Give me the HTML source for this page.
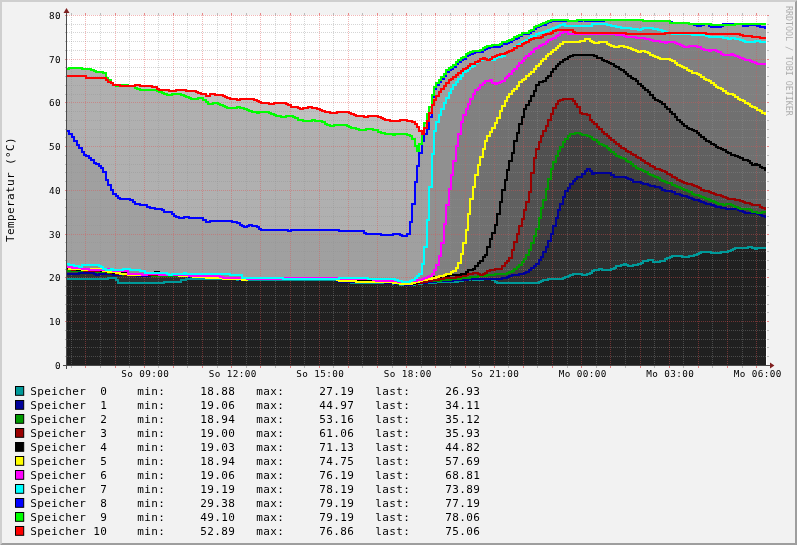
<!DOCTYPE html>
<html><head><meta charset="utf-8"><title>Speicher Temperatur</title>
<style>
html,body{margin:0;padding:0;background:#f2f2f2;overflow:hidden}
svg{display:block;will-change:transform}
text{font-family:"DejaVu Sans Mono","Liberation Mono",monospace;fill:#000;white-space:pre}
.ax{font-size:9.3px;letter-spacing:0.4px}
.lg{font-size:11px;letter-spacing:0.378px}
.wm{font-size:8.4px;letter-spacing:-0.057px;fill:#000;fill-opacity:0.30}
</style></head><body>
<svg width="797" height="545" viewBox="0 0 797 545">
<rect x="0" y="0" width="797" height="545" fill="#f2f2f2"/>
<path d="M0,0H797L795,2H2V543L0,545Z" fill="#cfcfcf"/>
<path d="M797,545H0L2,543H795V2L797,0Z" fill="#9e9e9e"/>
<rect x="67" y="15.0" width="700" height="350.0" fill="#ffffff"/>
<g shape-rendering="crispEdges">
<path d="M67,76H86V78H106V80H108V82H111V83H113V85H120V86H135V85H140V86H152V87H157V89H159V90H169V91H176V90H186V91H196V92H198V93H201V94H206V96H210V94H215V95H223V96H225V97H227V98H230V99H237V100H240V99H254V100H257V101H259V102H261V103H269V104H274V103H286V104H288V105H291V107H298V108H300V109H303V108H308V107H312V108H317V109H320V110H322V111H325V112H330V113H337V112H349V113H351V114H354V115H356V116H364V117H368V116H378V117H381V118H383V119H385V120H390V121H400V120H407V121H412V122H415V124H417V127H419V131H422V134H424V128H427V121H429V113H432V105H434V100H436V96H439V92H441V89H444V86H446V83H449V80H451V79H453V77H456V75H458V73H461V71H463V69H466V68H468V66H470V64H475V62H478V61H480V59H483V58H485V59H487V60H490V59H492V57H495V56H497V55H500V54H505V53H507V52H509V51H512V50H514V48H517V46H522V44H524V43H526V42H529V40H531V39H534V38H541V37H543V35H546V34H551V33H553V31H556V30H573V32H575V33H626V34H665V33H706V34H740V35H743V36H752V37H760V38H766V365H67Z" fill="#c0c0c0"/>
<path d="M67,69H69V68H82V69H91V70H94V71H96V72H103V73H106V78H108V80H111V83H113V85H116V86H118V85H128V86H135V88H137V89H140V90H157V91H159V92H162V93H164V94H167V95H172V94H181V95H184V96H186V97H189V98H191V99H198V98H203V100H206V102H208V104H213V103H218V104H220V105H223V106H225V107H227V108H237V107H240V108H244V109H247V110H249V111H252V112H257V113H259V112H269V113H271V114H274V115H276V116H281V117H286V116H293V117H295V118H298V120H303V121H312V120H315V121H322V122H325V124H327V125H330V126H334V125H347V126H349V127H351V128H356V129H359V130H366V129H373V130H378V132H381V133H385V134H393V135H395V134H407V135H410V136H412V139H415V146H417V151H419V144H422V132H424V123H427V114H429V107H432V95H434V87H436V83H439V80H441V77H444V74H446V70H449V68H451V67H453V65H456V62H458V60H461V58H463V57H466V54H468V53H470V52H473V51H480V50H483V48H485V47H487V46H492V45H500V44H502V42H507V41H509V40H512V39H514V37H517V36H519V35H522V33H529V31H531V30H534V27H536V26H539V25H541V24H543V23H546V22H548V21H551V20H568V21H577V20H643V21H670V23H689V24H711V25H735V24H766V365H67Z" fill="#b0b0b0"/>
<path d="M67,131H69V134H72V137H74V141H77V145H79V148H82V152H84V155H86V156H89V158H91V160H94V163H96V164H99V166H101V168H103V172H106V180H108V185H111V190H113V194H116V196H118V198H120V199H130V200H133V202H135V204H140V205H147V207H150V208H155V209H162V210H164V212H172V214H174V216H176V217H179V218H184V217H189V218H203V220H206V222H210V221H232V222H237V223H240V225H242V226H244V227H247V226H249V225H252V226H257V227H259V229H261V230H288V231H291V230H339V231H364V233H366V234H381V235H393V234H400V235H402V236H407V234H410V222H412V204H415V182H417V166H419V153H422V141H424V134H427V129H429V117H432V97H434V89H436V85H439V82H441V79H444V76H446V72H449V70H451V69H453V67H456V64H458V62H461V60H463V59H466V56H468V55H470V54H473V53H475V52H483V50H485V49H487V48H490V47H500V46H502V44H507V43H509V42H512V40H514V39H517V38H519V36H522V34H529V33H531V31H534V29H536V27H539V26H541V25H546V23H548V22H551V21H582V20H585V21H604V20H643V21H670V22H672V23H689V24H694V25H697V26H701V25H704V24H709V26H711V27H721V26H723V24H743V26H748V25H757V26H760V27H765V28H766V365H67Z" fill="#a0a0a0"/>
<path d="M67,264H69V265H74V266H79V267H82V265H99V266H101V267H103V269H106V270H111V269H113V270H123V269H130V270H140V271H145V273H167V274H169V275H172V274H184V273H186V274H230V275H242V278H283V279H339V278H368V279H395V280H398V281H402V282H410V281H412V280H415V278H417V276H419V274H422V264H424V247H427V220H429V187H432V154H434V131H436V122H439V115H441V109H444V103H446V98H449V93H451V89H453V85H456V82H458V79H461V76H463V72H466V71H468V69H470V67H473V66H475V63H478V61H480V60H483V58H485V59H490V58H492V60H495V58H497V57H502V56H505V53H507V52H509V51H512V50H514V47H517V45H519V44H522V42H524V41H526V40H529V38H531V36H536V34H539V33H543V32H546V31H548V30H551V29H553V28H556V27H558V26H560V25H563V24H565V26H592V24H607V25H611V26H616V27H621V28H631V29H638V30H641V29H643V28H653V29H658V30H662V31H665V32H667V33H672V34H692V35H706V36H709V37H723V38H728V39H731V38H735V39H740V40H743V41H745V42H755V41H760V42H766V365H67Z" fill="#909090"/>
<path d="M67,267H72V268H82V269H89V270H106V269H111V270H113V271H128V274H142V275H147V274H159V275H189V276H220V277H223V278H247V279H283V278H337V279H373V280H376V281H398V282H410V281H417V280H422V279H424V278H427V277H429V276H432V274H434V270H436V265H439V256H441V243H444V224H446V205H449V189H451V175H453V161H456V146H458V134H461V122H463V115H466V109H468V104H470V99H473V94H475V90H478V88H480V85H483V83H485V81H490V80H492V83H495V84H497V83H500V82H502V81H505V78H507V76H509V74H512V71H514V69H517V66H519V63H522V61H524V58H526V56H529V54H531V52H534V49H536V48H539V46H541V45H543V44H546V42H548V40H551V39H553V38H556V36H558V35H560V33H563V32H568V34H616V35H624V36H626V37H636V38H645V39H650V40H653V41H660V42H665V43H667V42H675V43H677V44H680V45H682V46H684V47H689V46H697V47H701V49H704V50H709V51H711V50H716V51H718V52H721V54H723V55H731V54H733V55H735V56H738V57H740V58H743V59H745V60H750V61H752V62H755V63H757V64H766V365H67Z" fill="#808080"/>
<path d="M67,267H69V269H82V270H91V269H101V270H103V271H108V272H116V273H120V274H128V275H147V274H150V273H157V274H162V275H179V276H193V277H206V278H223V279H242V280H247V279H337V280H339V281H356V282H393V283H400V284H412V283H415V282H419V281H422V280H427V279H432V278H436V277H439V276H444V275H446V274H451V272H453V271H456V268H458V263H461V254H463V243H466V230H468V214H470V199H473V187H475V175H478V165H480V157H483V149H485V141H487V136H490V132H492V128H495V123H497V118H500V111H502V106H505V101H507V97H509V94H512V91H514V89H517V86H519V82H522V80H524V79H526V76H529V74H531V72H534V69H536V66H539V64H541V61H543V59H546V56H548V54H551V52H553V50H556V48H558V46H560V44H563V42H580V41H585V39H590V41H592V42H594V43H599V42H607V44H609V45H611V46H614V47H619V46H624V47H628V48H631V49H633V50H636V51H638V52H641V51H645V52H648V53H650V55H653V56H655V57H658V58H660V59H670V60H672V61H675V63H677V65H680V66H682V67H684V68H687V70H689V71H692V73H697V74H699V75H701V77H704V79H706V80H709V81H711V83H714V85H716V87H718V88H721V89H723V91H726V93H728V94H733V95H735V97H738V99H740V100H743V101H745V103H748V104H750V106H752V107H755V108H757V110H760V111H762V113H765V114H766V365H67Z" fill="#707070"/>
<path d="M67,268H69V269H77V270H101V271H108V272H113V273H128V274H130V275H147V274H152V273H155V272H159V273H162V274H164V275H181V276H198V277H220V278H223V279H337V280H344V281H388V282H393V283H402V284H415V283H419V281H422V280H427V279H432V278H434V277H441V276H449V275H461V274H466V272H468V270H473V269H475V266H478V263H480V261H483V257H485V255H487V247H490V239H492V233H495V225H497V214H500V202H502V190H505V180H507V170H509V161H512V153H514V141H517V133H519V124H522V117H524V109H526V105H529V101H531V96H534V91H536V85H539V82H543V81H546V78H548V76H551V72H553V69H556V66H558V64H560V62H563V60H565V59H568V57H570V56H573V55H594V56H597V58H602V60H604V61H607V62H609V63H611V64H614V66H616V67H619V69H621V70H624V72H626V74H628V76H631V78H633V79H636V81H638V84H641V86H643V88H645V90H648V92H650V95H653V98H655V100H658V101H660V102H662V104H665V107H667V109H670V112H672V114H675V117H677V120H680V122H682V124H684V126H687V128H689V129H692V130H694V131H697V133H699V135H701V137H704V139H706V141H709V142H711V144H714V145H716V147H718V148H721V149H723V150H726V152H728V153H731V155H735V156H738V157H740V158H743V160H748V161H750V163H752V165H755V164H757V165H760V167H762V168H765V170H766V365H67Z" fill="#606060"/>
<path d="M67,269H72V270H84V271H106V272H111V273H116V274H125V275H179V276H196V277H215V278H223V279H337V280H339V281H383V282H393V283H400V284H417V283H422V282H427V281H432V280H439V279H444V278H456V277H461V276H466V275H468V274H473V273H478V274H480V275H483V274H485V273H487V271H490V270H495V269H502V266H505V263H507V261H509V258H512V250H514V242H517V234H519V226H522V219H524V210H526V202H529V192H531V173H534V158H536V149H539V142H541V136H543V131H546V126H548V120H551V114H553V108H556V104H558V101H560V100H563V99H573V101H575V104H577V107H580V113H582V114H587V115H590V120H592V122H594V124H597V127H599V129H602V132H604V134H607V136H609V138H611V140H614V142H616V144H619V146H621V148H624V149H626V151H628V152H631V154H633V155H636V157H638V158H641V160H643V161H645V163H648V164H650V166H653V167H655V169H660V170H662V171H665V172H667V174H670V175H672V177H675V178H677V180H680V181H682V182H684V183H687V184H692V185H694V186H697V187H699V188H701V190H704V191H709V192H711V193H714V194H716V195H721V196H723V197H726V198H728V199H735V200H740V201H743V202H745V203H750V204H752V205H760V207H762V208H765V209H766V365H67Z" fill="#505050"/>
<path d="M67,271H96V272H108V273H116V274H123V275H152V276H191V277H210V278H223V279H244V280H247V279H337V280H339V281H383V282H393V283H398V284H417V283H422V282H427V281H441V280H451V279H461V278H470V277H478V276H487V275H495V274H507V273H509V272H512V271H514V269H517V267H519V265H522V262H524V259H526V255H529V250H531V243H534V236H536V229H539V218H541V208H543V200H546V189H548V179H551V169H553V162H556V156H558V151H560V147H563V142H565V139H568V136H570V134H575V133H580V134H582V135H587V136H590V137H592V139H594V140H597V142H599V144H602V145H604V146H607V148H609V150H611V152H614V154H616V156H619V157H621V158H624V159H626V161H628V162H631V164H633V166H636V168H638V169H641V170H643V171H645V172H648V174H650V175H653V176H655V177H658V178H660V180H662V181H665V182H667V183H672V185H675V186H677V187H680V188H682V189H684V190H687V191H689V192H692V194H694V195H699V196H701V197H704V198H706V199H709V200H711V201H714V202H716V203H718V204H723V205H726V204H731V205H733V206H735V207H738V208H740V209H750V210H752V212H757V213H762V212H766V365H67Z" fill="#404040"/>
<path d="M67,274H79V273H94V274H96V275H99V274H113V275H137V276H189V277H208V278H223V279H240V280H247V279H337V281H339V282H385V283H395V284H405V285H412V284H417V283H427V282H436V281H453V280H468V279H502V278H507V277H509V276H512V275H519V274H524V273H526V272H529V270H531V268H534V266H536V264H539V260H541V257H543V252H546V247H548V241H551V234H553V226H556V218H558V210H560V204H563V197H565V191H568V188H570V184H573V181H575V179H577V177H582V174H585V171H587V169H590V171H592V174H594V173H611V175H614V177H626V178H628V179H631V180H633V182H641V183H643V184H648V185H650V186H655V187H660V188H662V190H665V191H672V192H675V194H680V195H682V196H687V197H689V198H692V199H694V200H699V201H701V202H704V203H706V204H711V205H714V206H716V207H721V208H726V209H735V208H738V210H740V211H743V212H745V213H757V214H760V215H762V216H765V217H766V365H67Z" fill="#303030"/>
<path d="M67,279H108V278H116V280H118V283H164V282H181V280H186V279H237V280H337V281H339V282H351V283H393V284H400V285H415V284H422V283H436V282H458V281H463V280H470V279H473V280H483V279H492V280H495V282H497V283H539V282H541V281H543V280H548V279H563V278H565V277H568V276H570V275H573V274H582V275H587V274H590V273H592V271H594V270H599V269H602V270H611V269H614V268H616V266H621V265H624V264H626V265H628V266H633V265H638V264H641V263H643V261H648V260H653V262H660V261H665V259H667V258H670V257H672V256H682V257H689V256H694V255H697V254H699V253H701V252H711V253H721V252H728V251H731V250H733V249H735V248H748V247H752V248H755V249H757V248H766V365H67Z" fill="#202020"/>
</g>
<g fill="none" stroke-width="1" shape-rendering="crispEdges">
<path d="M67,356.5H767" stroke="rgba(144,144,144,0.38)" stroke-dasharray="1 1"/>
<path d="M67,347.5H767" stroke="rgba(144,144,144,0.38)" stroke-dasharray="1 1"/>
<path d="M67,339.5H767" stroke="rgba(144,144,144,0.38)" stroke-dasharray="1 1"/>
<path d="M67,330.5H767" stroke="rgba(144,144,144,0.38)" stroke-dasharray="1 1"/>
<path d="M67,312.5H767" stroke="rgba(144,144,144,0.38)" stroke-dasharray="1 1"/>
<path d="M67,304.5H767" stroke="rgba(144,144,144,0.38)" stroke-dasharray="1 1"/>
<path d="M67,295.5H767" stroke="rgba(144,144,144,0.38)" stroke-dasharray="1 1"/>
<path d="M67,286.5H767" stroke="rgba(144,144,144,0.38)" stroke-dasharray="1 1"/>
<path d="M67,269.5H767" stroke="rgba(144,144,144,0.38)" stroke-dasharray="1 1"/>
<path d="M67,260.5H767" stroke="rgba(144,144,144,0.38)" stroke-dasharray="1 1"/>
<path d="M67,251.5H767" stroke="rgba(144,144,144,0.38)" stroke-dasharray="1 1"/>
<path d="M67,242.5H767" stroke="rgba(144,144,144,0.38)" stroke-dasharray="1 1"/>
<path d="M67,225.5H767" stroke="rgba(144,144,144,0.38)" stroke-dasharray="1 1"/>
<path d="M67,216.5H767" stroke="rgba(144,144,144,0.38)" stroke-dasharray="1 1"/>
<path d="M67,207.5H767" stroke="rgba(144,144,144,0.38)" stroke-dasharray="1 1"/>
<path d="M67,199.5H767" stroke="rgba(144,144,144,0.38)" stroke-dasharray="1 1"/>
<path d="M67,181.5H767" stroke="rgba(144,144,144,0.38)" stroke-dasharray="1 1"/>
<path d="M67,172.5H767" stroke="rgba(144,144,144,0.38)" stroke-dasharray="1 1"/>
<path d="M67,164.5H767" stroke="rgba(144,144,144,0.38)" stroke-dasharray="1 1"/>
<path d="M67,155.5H767" stroke="rgba(144,144,144,0.38)" stroke-dasharray="1 1"/>
<path d="M67,137.5H767" stroke="rgba(144,144,144,0.38)" stroke-dasharray="1 1"/>
<path d="M67,129.5H767" stroke="rgba(144,144,144,0.38)" stroke-dasharray="1 1"/>
<path d="M67,120.5H767" stroke="rgba(144,144,144,0.38)" stroke-dasharray="1 1"/>
<path d="M67,111.5H767" stroke="rgba(144,144,144,0.38)" stroke-dasharray="1 1"/>
<path d="M67,94.5H767" stroke="rgba(144,144,144,0.38)" stroke-dasharray="1 1"/>
<path d="M67,85.5H767" stroke="rgba(144,144,144,0.38)" stroke-dasharray="1 1"/>
<path d="M67,76.5H767" stroke="rgba(144,144,144,0.38)" stroke-dasharray="1 1"/>
<path d="M67,67.5H767" stroke="rgba(144,144,144,0.38)" stroke-dasharray="1 1"/>
<path d="M67,50.5H767" stroke="rgba(144,144,144,0.38)" stroke-dasharray="1 1"/>
<path d="M67,41.5H767" stroke="rgba(144,144,144,0.38)" stroke-dasharray="1 1"/>
<path d="M67,32.5H767" stroke="rgba(144,144,144,0.38)" stroke-dasharray="1 1"/>
<path d="M67,24.5H767" stroke="rgba(144,144,144,0.38)" stroke-dasharray="1 1"/>
<path d="M71.5,15.0V365.0" stroke="rgba(144,144,144,0.38)" stroke-dasharray="1 1"/>
<path d="M100.5,15.0V365.0" stroke="rgba(144,144,144,0.38)" stroke-dasharray="1 1"/>
<path d="M129.5,15.0V365.0" stroke="rgba(144,144,144,0.38)" stroke-dasharray="1 1"/>
<path d="M158.5,15.0V365.0" stroke="rgba(144,144,144,0.38)" stroke-dasharray="1 1"/>
<path d="M187.5,15.0V365.0" stroke="rgba(144,144,144,0.38)" stroke-dasharray="1 1"/>
<path d="M217.5,15.0V365.0" stroke="rgba(144,144,144,0.38)" stroke-dasharray="1 1"/>
<path d="M246.5,15.0V365.0" stroke="rgba(144,144,144,0.38)" stroke-dasharray="1 1"/>
<path d="M275.5,15.0V365.0" stroke="rgba(144,144,144,0.38)" stroke-dasharray="1 1"/>
<path d="M304.5,15.0V365.0" stroke="rgba(144,144,144,0.38)" stroke-dasharray="1 1"/>
<path d="M333.5,15.0V365.0" stroke="rgba(144,144,144,0.38)" stroke-dasharray="1 1"/>
<path d="M362.5,15.0V365.0" stroke="rgba(144,144,144,0.38)" stroke-dasharray="1 1"/>
<path d="M392.5,15.0V365.0" stroke="rgba(144,144,144,0.38)" stroke-dasharray="1 1"/>
<path d="M421.5,15.0V365.0" stroke="rgba(144,144,144,0.38)" stroke-dasharray="1 1"/>
<path d="M450.5,15.0V365.0" stroke="rgba(144,144,144,0.38)" stroke-dasharray="1 1"/>
<path d="M479.5,15.0V365.0" stroke="rgba(144,144,144,0.38)" stroke-dasharray="1 1"/>
<path d="M508.5,15.0V365.0" stroke="rgba(144,144,144,0.38)" stroke-dasharray="1 1"/>
<path d="M537.5,15.0V365.0" stroke="rgba(144,144,144,0.38)" stroke-dasharray="1 1"/>
<path d="M567.5,15.0V365.0" stroke="rgba(144,144,144,0.38)" stroke-dasharray="1 1"/>
<path d="M596.5,15.0V365.0" stroke="rgba(144,144,144,0.38)" stroke-dasharray="1 1"/>
<path d="M625.5,15.0V365.0" stroke="rgba(144,144,144,0.38)" stroke-dasharray="1 1"/>
<path d="M654.5,15.0V365.0" stroke="rgba(144,144,144,0.38)" stroke-dasharray="1 1"/>
<path d="M683.5,15.0V365.0" stroke="rgba(144,144,144,0.38)" stroke-dasharray="1 1"/>
<path d="M712.5,15.0V365.0" stroke="rgba(144,144,144,0.38)" stroke-dasharray="1 1"/>
<path d="M742.5,15.0V365.0" stroke="rgba(144,144,144,0.38)" stroke-dasharray="1 1"/>
<path d="M67,365.5H767" stroke="rgba(224,80,80,0.42)" stroke-dasharray="1 1"/>
<path d="M67,321.5H767" stroke="rgba(224,80,80,0.42)" stroke-dasharray="1 1"/>
<path d="M67,277.5H767" stroke="rgba(224,80,80,0.42)" stroke-dasharray="1 1"/>
<path d="M67,234.5H767" stroke="rgba(224,80,80,0.42)" stroke-dasharray="1 1"/>
<path d="M67,190.5H767" stroke="rgba(224,80,80,0.42)" stroke-dasharray="1 1"/>
<path d="M67,146.5H767" stroke="rgba(224,80,80,0.42)" stroke-dasharray="1 1"/>
<path d="M67,102.5H767" stroke="rgba(224,80,80,0.42)" stroke-dasharray="1 1"/>
<path d="M67,59.5H767" stroke="rgba(224,80,80,0.42)" stroke-dasharray="1 1"/>
<path d="M67,15.5H767" stroke="rgba(224,80,80,0.42)" stroke-dasharray="1 1"/>
<path d="M85.5,15.0V365.0" stroke="rgba(224,80,80,0.42)" stroke-dasharray="1 1"/>
<path d="M115.5,15.0V365.0" stroke="rgba(224,80,80,0.42)" stroke-dasharray="1 1"/>
<path d="M144.5,15.0V365.0" stroke="rgba(224,80,80,0.42)" stroke-dasharray="1 1"/>
<path d="M173.5,15.0V365.0" stroke="rgba(224,80,80,0.42)" stroke-dasharray="1 1"/>
<path d="M202.5,15.0V365.0" stroke="rgba(224,80,80,0.42)" stroke-dasharray="1 1"/>
<path d="M231.5,15.0V365.0" stroke="rgba(224,80,80,0.42)" stroke-dasharray="1 1"/>
<path d="M260.5,15.0V365.0" stroke="rgba(224,80,80,0.42)" stroke-dasharray="1 1"/>
<path d="M290.5,15.0V365.0" stroke="rgba(224,80,80,0.42)" stroke-dasharray="1 1"/>
<path d="M319.5,15.0V365.0" stroke="rgba(224,80,80,0.42)" stroke-dasharray="1 1"/>
<path d="M348.5,15.0V365.0" stroke="rgba(224,80,80,0.42)" stroke-dasharray="1 1"/>
<path d="M377.5,15.0V365.0" stroke="rgba(224,80,80,0.42)" stroke-dasharray="1 1"/>
<path d="M406.5,15.0V365.0" stroke="rgba(224,80,80,0.42)" stroke-dasharray="1 1"/>
<path d="M435.5,15.0V365.0" stroke="rgba(224,80,80,0.42)" stroke-dasharray="1 1"/>
<path d="M465.5,15.0V365.0" stroke="rgba(224,80,80,0.42)" stroke-dasharray="1 1"/>
<path d="M494.5,15.0V365.0" stroke="rgba(224,80,80,0.42)" stroke-dasharray="1 1"/>
<path d="M523.5,15.0V365.0" stroke="rgba(224,80,80,0.42)" stroke-dasharray="1 1"/>
<path d="M552.5,15.0V365.0" stroke="rgba(224,80,80,0.42)" stroke-dasharray="1 1"/>
<path d="M581.5,15.0V365.0" stroke="rgba(224,80,80,0.42)" stroke-dasharray="1 1"/>
<path d="M610.5,15.0V365.0" stroke="rgba(224,80,80,0.42)" stroke-dasharray="1 1"/>
<path d="M640.5,15.0V365.0" stroke="rgba(224,80,80,0.42)" stroke-dasharray="1 1"/>
<path d="M669.5,15.0V365.0" stroke="rgba(224,80,80,0.42)" stroke-dasharray="1 1"/>
<path d="M698.5,15.0V365.0" stroke="rgba(224,80,80,0.42)" stroke-dasharray="1 1"/>
<path d="M727.5,15.0V365.0" stroke="rgba(224,80,80,0.42)" stroke-dasharray="1 1"/>
<path d="M756.5,15.0V365.0" stroke="rgba(224,80,80,0.42)" stroke-dasharray="1 1"/>
<path d="M64.5,365.5H66.5M767,365.5H769" stroke="rgba(224,80,80,0.65)"/>
<path d="M64.5,356.5H66.5M767,356.5H769" stroke="rgba(144,144,144,0.55)"/>
<path d="M64.5,347.5H66.5M767,347.5H769" stroke="rgba(144,144,144,0.55)"/>
<path d="M64.5,339.5H66.5M767,339.5H769" stroke="rgba(144,144,144,0.55)"/>
<path d="M64.5,330.5H66.5M767,330.5H769" stroke="rgba(144,144,144,0.55)"/>
<path d="M64.5,321.5H66.5M767,321.5H769" stroke="rgba(224,80,80,0.65)"/>
<path d="M64.5,312.5H66.5M767,312.5H769" stroke="rgba(144,144,144,0.55)"/>
<path d="M64.5,304.5H66.5M767,304.5H769" stroke="rgba(144,144,144,0.55)"/>
<path d="M64.5,295.5H66.5M767,295.5H769" stroke="rgba(144,144,144,0.55)"/>
<path d="M64.5,286.5H66.5M767,286.5H769" stroke="rgba(144,144,144,0.55)"/>
<path d="M64.5,277.5H66.5M767,277.5H769" stroke="rgba(224,80,80,0.65)"/>
<path d="M64.5,269.5H66.5M767,269.5H769" stroke="rgba(144,144,144,0.55)"/>
<path d="M64.5,260.5H66.5M767,260.5H769" stroke="rgba(144,144,144,0.55)"/>
<path d="M64.5,251.5H66.5M767,251.5H769" stroke="rgba(144,144,144,0.55)"/>
<path d="M64.5,242.5H66.5M767,242.5H769" stroke="rgba(144,144,144,0.55)"/>
<path d="M64.5,234.5H66.5M767,234.5H769" stroke="rgba(224,80,80,0.65)"/>
<path d="M64.5,225.5H66.5M767,225.5H769" stroke="rgba(144,144,144,0.55)"/>
<path d="M64.5,216.5H66.5M767,216.5H769" stroke="rgba(144,144,144,0.55)"/>
<path d="M64.5,207.5H66.5M767,207.5H769" stroke="rgba(144,144,144,0.55)"/>
<path d="M64.5,199.5H66.5M767,199.5H769" stroke="rgba(144,144,144,0.55)"/>
<path d="M64.5,190.5H66.5M767,190.5H769" stroke="rgba(224,80,80,0.65)"/>
<path d="M64.5,181.5H66.5M767,181.5H769" stroke="rgba(144,144,144,0.55)"/>
<path d="M64.5,172.5H66.5M767,172.5H769" stroke="rgba(144,144,144,0.55)"/>
<path d="M64.5,164.5H66.5M767,164.5H769" stroke="rgba(144,144,144,0.55)"/>
<path d="M64.5,155.5H66.5M767,155.5H769" stroke="rgba(144,144,144,0.55)"/>
<path d="M64.5,146.5H66.5M767,146.5H769" stroke="rgba(224,80,80,0.65)"/>
<path d="M64.5,137.5H66.5M767,137.5H769" stroke="rgba(144,144,144,0.55)"/>
<path d="M64.5,129.5H66.5M767,129.5H769" stroke="rgba(144,144,144,0.55)"/>
<path d="M64.5,120.5H66.5M767,120.5H769" stroke="rgba(144,144,144,0.55)"/>
<path d="M64.5,111.5H66.5M767,111.5H769" stroke="rgba(144,144,144,0.55)"/>
<path d="M64.5,102.5H66.5M767,102.5H769" stroke="rgba(224,80,80,0.65)"/>
<path d="M64.5,94.5H66.5M767,94.5H769" stroke="rgba(144,144,144,0.55)"/>
<path d="M64.5,85.5H66.5M767,85.5H769" stroke="rgba(144,144,144,0.55)"/>
<path d="M64.5,76.5H66.5M767,76.5H769" stroke="rgba(144,144,144,0.55)"/>
<path d="M64.5,67.5H66.5M767,67.5H769" stroke="rgba(144,144,144,0.55)"/>
<path d="M64.5,59.5H66.5M767,59.5H769" stroke="rgba(224,80,80,0.65)"/>
<path d="M64.5,50.5H66.5M767,50.5H769" stroke="rgba(144,144,144,0.55)"/>
<path d="M64.5,41.5H66.5M767,41.5H769" stroke="rgba(144,144,144,0.55)"/>
<path d="M64.5,32.5H66.5M767,32.5H769" stroke="rgba(144,144,144,0.55)"/>
<path d="M64.5,24.5H66.5M767,24.5H769" stroke="rgba(144,144,144,0.55)"/>
<path d="M64.5,15.5H66.5M767,15.5H769" stroke="rgba(224,80,80,0.65)"/>
<path d="M71.5,13.0V15.0M71.5,366.0V368.0" stroke="rgba(144,144,144,0.55)"/>
<path d="M85.5,13.0V15.0M85.5,366.0V368.0" stroke="rgba(224,80,80,0.65)"/>
<path d="M100.5,13.0V15.0M100.5,366.0V368.0" stroke="rgba(144,144,144,0.55)"/>
<path d="M115.5,13.0V15.0M115.5,366.0V368.0" stroke="rgba(224,80,80,0.65)"/>
<path d="M129.5,13.0V15.0M129.5,366.0V368.0" stroke="rgba(144,144,144,0.55)"/>
<path d="M144.5,13.0V15.0M144.5,366.0V368.0" stroke="rgba(224,80,80,0.65)"/>
<path d="M158.5,13.0V15.0M158.5,366.0V368.0" stroke="rgba(144,144,144,0.55)"/>
<path d="M173.5,13.0V15.0M173.5,366.0V368.0" stroke="rgba(224,80,80,0.65)"/>
<path d="M187.5,13.0V15.0M187.5,366.0V368.0" stroke="rgba(144,144,144,0.55)"/>
<path d="M202.5,13.0V15.0M202.5,366.0V368.0" stroke="rgba(224,80,80,0.65)"/>
<path d="M217.5,13.0V15.0M217.5,366.0V368.0" stroke="rgba(144,144,144,0.55)"/>
<path d="M231.5,13.0V15.0M231.5,366.0V368.0" stroke="rgba(224,80,80,0.65)"/>
<path d="M246.5,13.0V15.0M246.5,366.0V368.0" stroke="rgba(144,144,144,0.55)"/>
<path d="M260.5,13.0V15.0M260.5,366.0V368.0" stroke="rgba(224,80,80,0.65)"/>
<path d="M275.5,13.0V15.0M275.5,366.0V368.0" stroke="rgba(144,144,144,0.55)"/>
<path d="M290.5,13.0V15.0M290.5,366.0V368.0" stroke="rgba(224,80,80,0.65)"/>
<path d="M304.5,13.0V15.0M304.5,366.0V368.0" stroke="rgba(144,144,144,0.55)"/>
<path d="M319.5,13.0V15.0M319.5,366.0V368.0" stroke="rgba(224,80,80,0.65)"/>
<path d="M333.5,13.0V15.0M333.5,366.0V368.0" stroke="rgba(144,144,144,0.55)"/>
<path d="M348.5,13.0V15.0M348.5,366.0V368.0" stroke="rgba(224,80,80,0.65)"/>
<path d="M362.5,13.0V15.0M362.5,366.0V368.0" stroke="rgba(144,144,144,0.55)"/>
<path d="M377.5,13.0V15.0M377.5,366.0V368.0" stroke="rgba(224,80,80,0.65)"/>
<path d="M392.5,13.0V15.0M392.5,366.0V368.0" stroke="rgba(144,144,144,0.55)"/>
<path d="M406.5,13.0V15.0M406.5,366.0V368.0" stroke="rgba(224,80,80,0.65)"/>
<path d="M421.5,13.0V15.0M421.5,366.0V368.0" stroke="rgba(144,144,144,0.55)"/>
<path d="M435.5,13.0V15.0M435.5,366.0V368.0" stroke="rgba(224,80,80,0.65)"/>
<path d="M450.5,13.0V15.0M450.5,366.0V368.0" stroke="rgba(144,144,144,0.55)"/>
<path d="M465.5,13.0V15.0M465.5,366.0V368.0" stroke="rgba(224,80,80,0.65)"/>
<path d="M479.5,13.0V15.0M479.5,366.0V368.0" stroke="rgba(144,144,144,0.55)"/>
<path d="M494.5,13.0V15.0M494.5,366.0V368.0" stroke="rgba(224,80,80,0.65)"/>
<path d="M508.5,13.0V15.0M508.5,366.0V368.0" stroke="rgba(144,144,144,0.55)"/>
<path d="M523.5,13.0V15.0M523.5,366.0V368.0" stroke="rgba(224,80,80,0.65)"/>
<path d="M537.5,13.0V15.0M537.5,366.0V368.0" stroke="rgba(144,144,144,0.55)"/>
<path d="M552.5,13.0V15.0M552.5,366.0V368.0" stroke="rgba(224,80,80,0.65)"/>
<path d="M567.5,13.0V15.0M567.5,366.0V368.0" stroke="rgba(144,144,144,0.55)"/>
<path d="M581.5,13.0V15.0M581.5,366.0V368.0" stroke="rgba(224,80,80,0.65)"/>
<path d="M596.5,13.0V15.0M596.5,366.0V368.0" stroke="rgba(144,144,144,0.55)"/>
<path d="M610.5,13.0V15.0M610.5,366.0V368.0" stroke="rgba(224,80,80,0.65)"/>
<path d="M625.5,13.0V15.0M625.5,366.0V368.0" stroke="rgba(144,144,144,0.55)"/>
<path d="M640.5,13.0V15.0M640.5,366.0V368.0" stroke="rgba(224,80,80,0.65)"/>
<path d="M654.5,13.0V15.0M654.5,366.0V368.0" stroke="rgba(144,144,144,0.55)"/>
<path d="M669.5,13.0V15.0M669.5,366.0V368.0" stroke="rgba(224,80,80,0.65)"/>
<path d="M683.5,13.0V15.0M683.5,366.0V368.0" stroke="rgba(144,144,144,0.55)"/>
<path d="M698.5,13.0V15.0M698.5,366.0V368.0" stroke="rgba(224,80,80,0.65)"/>
<path d="M712.5,13.0V15.0M712.5,366.0V368.0" stroke="rgba(144,144,144,0.55)"/>
<path d="M727.5,13.0V15.0M727.5,366.0V368.0" stroke="rgba(224,80,80,0.65)"/>
<path d="M742.5,13.0V15.0M742.5,366.0V368.0" stroke="rgba(144,144,144,0.55)"/>
<path d="M756.5,13.0V15.0M756.5,366.0V368.0" stroke="rgba(224,80,80,0.65)"/>
</g>
<g fill="none" stroke-width="2" stroke-linejoin="miter" shape-rendering="crispEdges">
<path d="M67,279H108V278H116V280H118V283H164V282H181V280H186V279H237V280H337V281H339V282H351V283H393V284H400V285H415V284H422V283H436V282H458V281H463V280H470V279H473V280H483V279H492V280H495V282H497V283H539V282H541V281H543V280H548V279H563V278H565V277H568V276H570V275H573V274H582V275H587V274H590V273H592V271H594V270H599V269H602V270H611V269H614V268H616V266H621V265H624V264H626V265H628V266H633V265H638V264H641V263H643V261H648V260H653V262H660V261H665V259H667V258H670V257H672V256H682V257H689V256H694V255H697V254H699V253H701V252H711V253H721V252H728V251H731V250H733V249H735V248H748V247H752V248H755V249H757V248H766" stroke="#009999"/>
<path d="M67,274H79V273H94V274H96V275H99V274H113V275H137V276H189V277H208V278H223V279H240V280H247V279H337V281H339V282H385V283H395V284H405V285H412V284H417V283H427V282H436V281H453V280H468V279H502V278H507V277H509V276H512V275H519V274H524V273H526V272H529V270H531V268H534V266H536V264H539V260H541V257H543V252H546V247H548V241H551V234H553V226H556V218H558V210H560V204H563V197H565V191H568V188H570V184H573V181H575V179H577V177H582V174H585V171H587V169H590V171H592V174H594V173H611V175H614V177H626V178H628V179H631V180H633V182H641V183H643V184H648V185H650V186H655V187H660V188H662V190H665V191H672V192H675V194H680V195H682V196H687V197H689V198H692V199H694V200H699V201H701V202H704V203H706V204H711V205H714V206H716V207H721V208H726V209H735V208H738V210H740V211H743V212H745V213H757V214H760V215H762V216H765V217H766" stroke="#000099"/>
<path d="M67,271H96V272H108V273H116V274H123V275H152V276H191V277H210V278H223V279H244V280H247V279H337V280H339V281H383V282H393V283H398V284H417V283H422V282H427V281H441V280H451V279H461V278H470V277H478V276H487V275H495V274H507V273H509V272H512V271H514V269H517V267H519V265H522V262H524V259H526V255H529V250H531V243H534V236H536V229H539V218H541V208H543V200H546V189H548V179H551V169H553V162H556V156H558V151H560V147H563V142H565V139H568V136H570V134H575V133H580V134H582V135H587V136H590V137H592V139H594V140H597V142H599V144H602V145H604V146H607V148H609V150H611V152H614V154H616V156H619V157H621V158H624V159H626V161H628V162H631V164H633V166H636V168H638V169H641V170H643V171H645V172H648V174H650V175H653V176H655V177H658V178H660V180H662V181H665V182H667V183H672V185H675V186H677V187H680V188H682V189H684V190H687V191H689V192H692V194H694V195H699V196H701V197H704V198H706V199H709V200H711V201H714V202H716V203H718V204H723V205H726V204H731V205H733V206H735V207H738V208H740V209H750V210H752V212H757V213H762V212H766" stroke="#009900"/>
<path d="M67,269H72V270H84V271H106V272H111V273H116V274H125V275H179V276H196V277H215V278H223V279H337V280H339V281H383V282H393V283H400V284H417V283H422V282H427V281H432V280H439V279H444V278H456V277H461V276H466V275H468V274H473V273H478V274H480V275H483V274H485V273H487V271H490V270H495V269H502V266H505V263H507V261H509V258H512V250H514V242H517V234H519V226H522V219H524V210H526V202H529V192H531V173H534V158H536V149H539V142H541V136H543V131H546V126H548V120H551V114H553V108H556V104H558V101H560V100H563V99H573V101H575V104H577V107H580V113H582V114H587V115H590V120H592V122H594V124H597V127H599V129H602V132H604V134H607V136H609V138H611V140H614V142H616V144H619V146H621V148H624V149H626V151H628V152H631V154H633V155H636V157H638V158H641V160H643V161H645V163H648V164H650V166H653V167H655V169H660V170H662V171H665V172H667V174H670V175H672V177H675V178H677V180H680V181H682V182H684V183H687V184H692V185H694V186H697V187H699V188H701V190H704V191H709V192H711V193H714V194H716V195H721V196H723V197H726V198H728V199H735V200H740V201H743V202H745V203H750V204H752V205H760V207H762V208H765V209H766" stroke="#990000"/>
<path d="M67,268H69V269H77V270H101V271H108V272H113V273H128V274H130V275H147V274H152V273H155V272H159V273H162V274H164V275H181V276H198V277H220V278H223V279H337V280H344V281H388V282H393V283H402V284H415V283H419V281H422V280H427V279H432V278H434V277H441V276H449V275H461V274H466V272H468V270H473V269H475V266H478V263H480V261H483V257H485V255H487V247H490V239H492V233H495V225H497V214H500V202H502V190H505V180H507V170H509V161H512V153H514V141H517V133H519V124H522V117H524V109H526V105H529V101H531V96H534V91H536V85H539V82H543V81H546V78H548V76H551V72H553V69H556V66H558V64H560V62H563V60H565V59H568V57H570V56H573V55H594V56H597V58H602V60H604V61H607V62H609V63H611V64H614V66H616V67H619V69H621V70H624V72H626V74H628V76H631V78H633V79H636V81H638V84H641V86H643V88H645V90H648V92H650V95H653V98H655V100H658V101H660V102H662V104H665V107H667V109H670V112H672V114H675V117H677V120H680V122H682V124H684V126H687V128H689V129H692V130H694V131H697V133H699V135H701V137H704V139H706V141H709V142H711V144H714V145H716V147H718V148H721V149H723V150H726V152H728V153H731V155H735V156H738V157H740V158H743V160H748V161H750V163H752V165H755V164H757V165H760V167H762V168H765V170H766" stroke="#000000"/>
<path d="M67,267H69V269H82V270H91V269H101V270H103V271H108V272H116V273H120V274H128V275H147V274H150V273H157V274H162V275H179V276H193V277H206V278H223V279H242V280H247V279H337V280H339V281H356V282H393V283H400V284H412V283H415V282H419V281H422V280H427V279H432V278H436V277H439V276H444V275H446V274H451V272H453V271H456V268H458V263H461V254H463V243H466V230H468V214H470V199H473V187H475V175H478V165H480V157H483V149H485V141H487V136H490V132H492V128H495V123H497V118H500V111H502V106H505V101H507V97H509V94H512V91H514V89H517V86H519V82H522V80H524V79H526V76H529V74H531V72H534V69H536V66H539V64H541V61H543V59H546V56H548V54H551V52H553V50H556V48H558V46H560V44H563V42H580V41H585V39H590V41H592V42H594V43H599V42H607V44H609V45H611V46H614V47H619V46H624V47H628V48H631V49H633V50H636V51H638V52H641V51H645V52H648V53H650V55H653V56H655V57H658V58H660V59H670V60H672V61H675V63H677V65H680V66H682V67H684V68H687V70H689V71H692V73H697V74H699V75H701V77H704V79H706V80H709V81H711V83H714V85H716V87H718V88H721V89H723V91H726V93H728V94H733V95H735V97H738V99H740V100H743V101H745V103H748V104H750V106H752V107H755V108H757V110H760V111H762V113H765V114H766" stroke="#ffff00"/>
<path d="M67,267H72V268H82V269H89V270H106V269H111V270H113V271H128V274H142V275H147V274H159V275H189V276H220V277H223V278H247V279H283V278H337V279H373V280H376V281H398V282H410V281H417V280H422V279H424V278H427V277H429V276H432V274H434V270H436V265H439V256H441V243H444V224H446V205H449V189H451V175H453V161H456V146H458V134H461V122H463V115H466V109H468V104H470V99H473V94H475V90H478V88H480V85H483V83H485V81H490V80H492V83H495V84H497V83H500V82H502V81H505V78H507V76H509V74H512V71H514V69H517V66H519V63H522V61H524V58H526V56H529V54H531V52H534V49H536V48H539V46H541V45H543V44H546V42H548V40H551V39H553V38H556V36H558V35H560V33H563V32H568V34H616V35H624V36H626V37H636V38H645V39H650V40H653V41H660V42H665V43H667V42H675V43H677V44H680V45H682V46H684V47H689V46H697V47H701V49H704V50H709V51H711V50H716V51H718V52H721V54H723V55H731V54H733V55H735V56H738V57H740V58H743V59H745V60H750V61H752V62H755V63H757V64H766" stroke="#ff00ff"/>
<path d="M67,264H69V265H74V266H79V267H82V265H99V266H101V267H103V269H106V270H111V269H113V270H123V269H130V270H140V271H145V273H167V274H169V275H172V274H184V273H186V274H230V275H242V278H283V279H339V278H368V279H395V280H398V281H402V282H410V281H412V280H415V278H417V276H419V274H422V264H424V247H427V220H429V187H432V154H434V131H436V122H439V115H441V109H444V103H446V98H449V93H451V89H453V85H456V82H458V79H461V76H463V72H466V71H468V69H470V67H473V66H475V63H478V61H480V60H483V58H485V59H490V58H492V60H495V58H497V57H502V56H505V53H507V52H509V51H512V50H514V47H517V45H519V44H522V42H524V41H526V40H529V38H531V36H536V34H539V33H543V32H546V31H548V30H551V29H553V28H556V27H558V26H560V25H563V24H565V26H592V24H607V25H611V26H616V27H621V28H631V29H638V30H641V29H643V28H653V29H658V30H662V31H665V32H667V33H672V34H692V35H706V36H709V37H723V38H728V39H731V38H735V39H740V40H743V41H745V42H755V41H760V42H766" stroke="#00ffff"/>
<path d="M67,131H69V134H72V137H74V141H77V145H79V148H82V152H84V155H86V156H89V158H91V160H94V163H96V164H99V166H101V168H103V172H106V180H108V185H111V190H113V194H116V196H118V198H120V199H130V200H133V202H135V204H140V205H147V207H150V208H155V209H162V210H164V212H172V214H174V216H176V217H179V218H184V217H189V218H203V220H206V222H210V221H232V222H237V223H240V225H242V226H244V227H247V226H249V225H252V226H257V227H259V229H261V230H288V231H291V230H339V231H364V233H366V234H381V235H393V234H400V235H402V236H407V234H410V222H412V204H415V182H417V166H419V153H422V141H424V134H427V129H429V117H432V97H434V89H436V85H439V82H441V79H444V76H446V72H449V70H451V69H453V67H456V64H458V62H461V60H463V59H466V56H468V55H470V54H473V53H475V52H483V50H485V49H487V48H490V47H500V46H502V44H507V43H509V42H512V40H514V39H517V38H519V36H522V34H529V33H531V31H534V29H536V27H539V26H541V25H546V23H548V22H551V21H582V20H585V21H604V20H643V21H670V22H672V23H689V24H694V25H697V26H701V25H704V24H709V26H711V27H721V26H723V24H743V26H748V25H757V26H760V27H765V28H766" stroke="#0000ff"/>
<path d="M67,69H69V68H82V69H91V70H94V71H96V72H103V73H106V78H108V80H111V83H113V85H116V86H118V85H128V86H135V88H137V89H140V90H157V91H159V92H162V93H164V94H167V95H172V94H181V95H184V96H186V97H189V98H191V99H198V98H203V100H206V102H208V104H213V103H218V104H220V105H223V106H225V107H227V108H237V107H240V108H244V109H247V110H249V111H252V112H257V113H259V112H269V113H271V114H274V115H276V116H281V117H286V116H293V117H295V118H298V120H303V121H312V120H315V121H322V122H325V124H327V125H330V126H334V125H347V126H349V127H351V128H356V129H359V130H366V129H373V130H378V132H381V133H385V134H393V135H395V134H407V135H410V136H412V139H415V146H417V151H419V144H422V132H424V123H427V114H429V107H432V95H434V87H436V83H439V80H441V77H444V74H446V70H449V68H451V67H453V65H456V62H458V60H461V58H463V57H466V54H468V53H470V52H473V51H480V50H483V48H485V47H487V46H492V45H500V44H502V42H507V41H509V40H512V39H514V37H517V36H519V35H522V33H529V31H531V30H534V27H536V26H539V25H541V24H543V23H546V22H548V21H551V20H568V21H577V20H643V21H670V23H689V24H711V25H735V24H766" stroke="#00ff00"/>
<path d="M67,76H86V78H106V80H108V82H111V83H113V85H120V86H135V85H140V86H152V87H157V89H159V90H169V91H176V90H186V91H196V92H198V93H201V94H206V96H210V94H215V95H223V96H225V97H227V98H230V99H237V100H240V99H254V100H257V101H259V102H261V103H269V104H274V103H286V104H288V105H291V107H298V108H300V109H303V108H308V107H312V108H317V109H320V110H322V111H325V112H330V113H337V112H349V113H351V114H354V115H356V116H364V117H368V116H378V117H381V118H383V119H385V120H390V121H400V120H407V121H412V122H415V124H417V127H419V131H422V134H424V128H427V121H429V113H432V105H434V100H436V96H439V92H441V89H444V86H446V83H449V80H451V79H453V77H456V75H458V73H461V71H463V69H466V68H468V66H470V64H475V62H478V61H480V59H483V58H485V59H487V60H490V59H492V57H495V56H497V55H500V54H505V53H507V52H509V51H512V50H514V48H517V46H522V44H524V43H526V42H529V40H531V39H534V38H541V37H543V35H546V34H551V33H553V31H556V30H573V32H575V33H626V34H665V33H706V34H740V35H743V36H752V37H760V38H766" stroke="#ff0000"/>
</g>
<path d="M63,365.5H771M66.5,369.0V11.0" stroke="#4a4a4a" stroke-width="1" fill="none"/>
<path d="M770,362.4L774.4,365.4L770,368.4Z" fill="#802020"/>
<path d="M63.5,13.0L66.5,8.0L69.5,13.0Z" fill="#802020"/>
<text class="ax" x="61" y="368.9" text-anchor="end">0</text>
<text class="ax" x="61" y="325.1" text-anchor="end">10</text>
<text class="ax" x="61" y="281.4" text-anchor="end">20</text>
<text class="ax" x="61" y="237.7" text-anchor="end">30</text>
<text class="ax" x="61" y="193.9" text-anchor="end">40</text>
<text class="ax" x="61" y="150.2" text-anchor="end">50</text>
<text class="ax" x="61" y="106.4" text-anchor="end">60</text>
<text class="ax" x="61" y="62.6" text-anchor="end">70</text>
<text class="ax" x="61" y="18.9" text-anchor="end">80</text>
<text class="ax" x="145.2" y="376.5" text-anchor="middle">So 09:00</text>
<text class="ax" x="232.7" y="376.5" text-anchor="middle">So 12:00</text>
<text class="ax" x="320.2" y="376.5" text-anchor="middle">So 15:00</text>
<text class="ax" x="407.7" y="376.5" text-anchor="middle">So 18:00</text>
<text class="ax" x="495.2" y="376.5" text-anchor="middle">So 21:00</text>
<text class="ax" x="582.7" y="376.5" text-anchor="middle">Mo 00:00</text>
<text class="ax" x="670.2" y="376.5" text-anchor="middle">Mo 03:00</text>
<text class="ax" x="757.7" y="376.5" text-anchor="middle">Mo 06:00</text>
<text class="lg" transform="translate(14.1,189.5) rotate(-90)" text-anchor="middle">Temperatur (°C)</text>
<text class="wm" transform="translate(785.8,6) rotate(90)">RRDTOOL / TOBI OETIKER</text>
<rect x="15.5" y="386.5" width="8.2" height="8.8" fill="#009999" stroke="#000" stroke-width="1"/>
<text xml:space="preserve" class="lg" x="30.3" y="395.1">Speicher  0</text>
<text xml:space="preserve" class="lg" x="137.3" y="395.1">min:     18.88   max:     27.19   last:     26.93</text>
<rect x="15.5" y="400.5" width="8.2" height="8.8" fill="#000099" stroke="#000" stroke-width="1"/>
<text xml:space="preserve" class="lg" x="30.3" y="409.1">Speicher  1</text>
<text xml:space="preserve" class="lg" x="137.3" y="409.1">min:     19.06   max:     44.97   last:     34.11</text>
<rect x="15.5" y="414.5" width="8.2" height="8.8" fill="#009900" stroke="#000" stroke-width="1"/>
<text xml:space="preserve" class="lg" x="30.3" y="423.1">Speicher  2</text>
<text xml:space="preserve" class="lg" x="137.3" y="423.1">min:     18.94   max:     53.16   last:     35.12</text>
<rect x="15.5" y="428.5" width="8.2" height="8.8" fill="#990000" stroke="#000" stroke-width="1"/>
<text xml:space="preserve" class="lg" x="30.3" y="437.1">Speicher  3</text>
<text xml:space="preserve" class="lg" x="137.3" y="437.1">min:     19.00   max:     61.06   last:     35.93</text>
<rect x="15.5" y="442.5" width="8.2" height="8.8" fill="#000000" stroke="#000" stroke-width="1"/>
<text xml:space="preserve" class="lg" x="30.3" y="451.1">Speicher  4</text>
<text xml:space="preserve" class="lg" x="137.3" y="451.1">min:     19.03   max:     71.13   last:     44.82</text>
<rect x="15.5" y="456.5" width="8.2" height="8.8" fill="#ffff00" stroke="#000" stroke-width="1"/>
<text xml:space="preserve" class="lg" x="30.3" y="465.1">Speicher  5</text>
<text xml:space="preserve" class="lg" x="137.3" y="465.1">min:     18.94   max:     74.75   last:     57.69</text>
<rect x="15.5" y="470.5" width="8.2" height="8.8" fill="#ff00ff" stroke="#000" stroke-width="1"/>
<text xml:space="preserve" class="lg" x="30.3" y="479.1">Speicher  6</text>
<text xml:space="preserve" class="lg" x="137.3" y="479.1">min:     19.06   max:     76.19   last:     68.81</text>
<rect x="15.5" y="484.5" width="8.2" height="8.8" fill="#00ffff" stroke="#000" stroke-width="1"/>
<text xml:space="preserve" class="lg" x="30.3" y="493.1">Speicher  7</text>
<text xml:space="preserve" class="lg" x="137.3" y="493.1">min:     19.19   max:     78.19   last:     73.89</text>
<rect x="15.5" y="498.5" width="8.2" height="8.8" fill="#0000ff" stroke="#000" stroke-width="1"/>
<text xml:space="preserve" class="lg" x="30.3" y="507.1">Speicher  8</text>
<text xml:space="preserve" class="lg" x="137.3" y="507.1">min:     29.38   max:     79.19   last:     77.19</text>
<rect x="15.5" y="512.5" width="8.2" height="8.8" fill="#00ff00" stroke="#000" stroke-width="1"/>
<text xml:space="preserve" class="lg" x="30.3" y="521.1">Speicher  9</text>
<text xml:space="preserve" class="lg" x="137.3" y="521.1">min:     49.10   max:     79.19   last:     78.06</text>
<rect x="15.5" y="526.5" width="8.2" height="8.8" fill="#ff0000" stroke="#000" stroke-width="1"/>
<text xml:space="preserve" class="lg" x="30.3" y="535.1">Speicher 10</text>
<text xml:space="preserve" class="lg" x="137.3" y="535.1">min:     52.89   max:     76.86   last:     75.06</text>
</svg>
</body></html>
